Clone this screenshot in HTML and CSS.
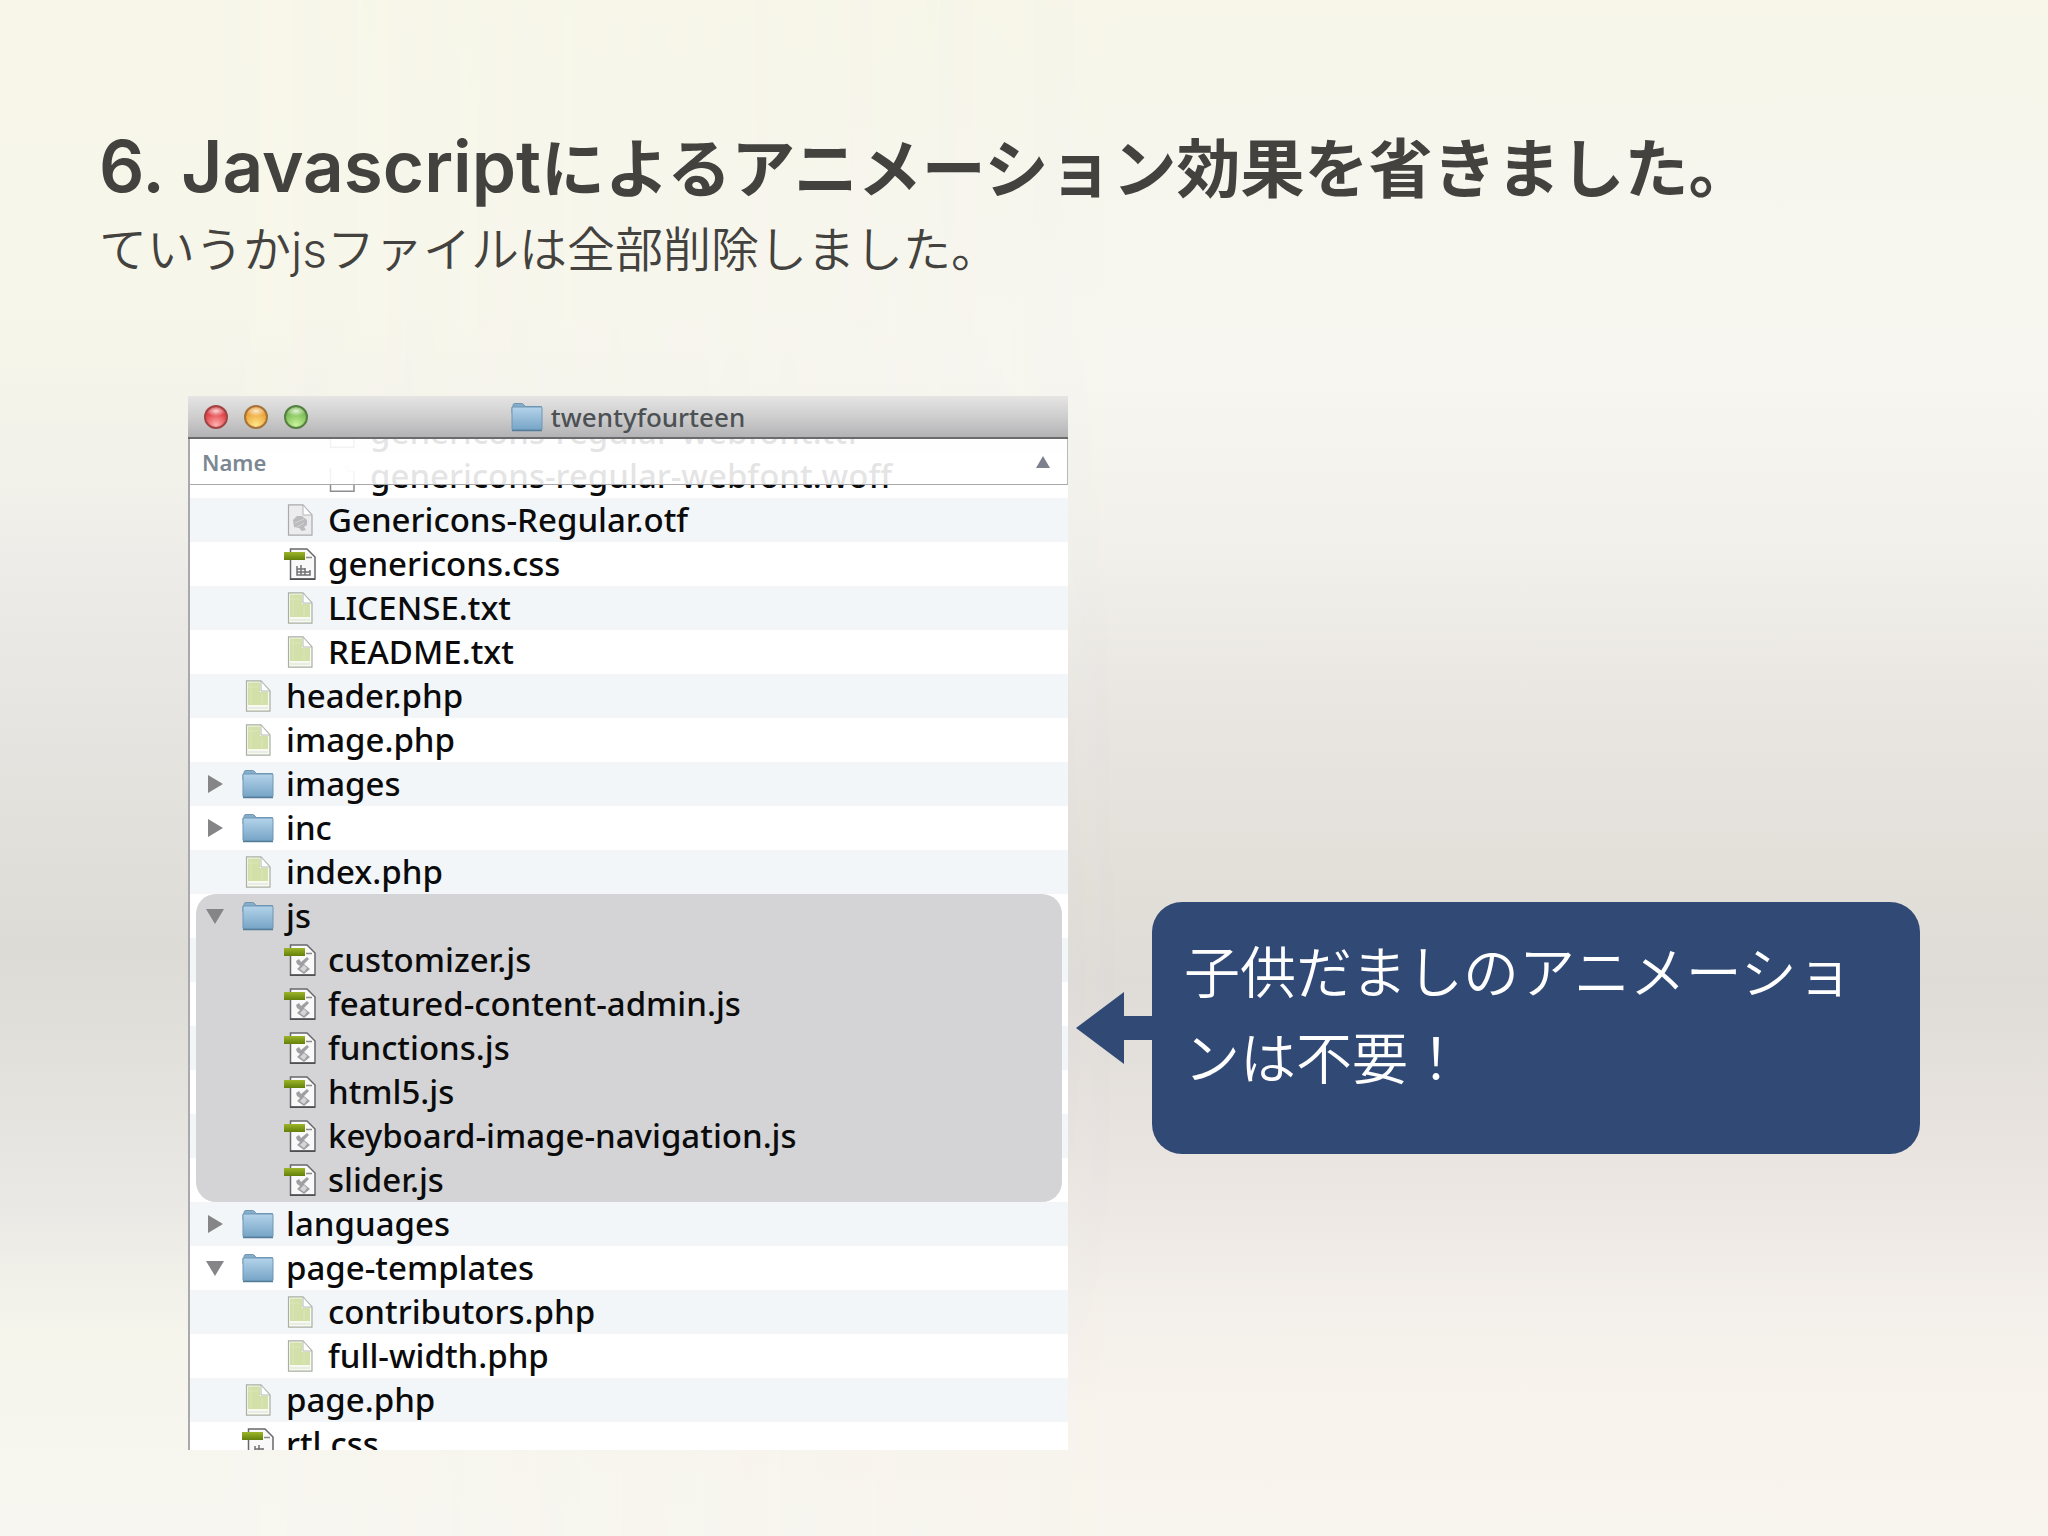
FILE: index.html
```html
<!DOCTYPE html>
<html lang="ja">
<head>
<meta charset="utf-8">
<title>Javascriptによるアニメーション効果を省きました。</title>
<meta name="viewport" content="width=device-width, initial-scale=1">
<link rel="stylesheet" href="styles.css">
</head>
<body>
<svg class="defs" aria-hidden="true">
  <defs>
    <linearGradient id="g-folder" x1="0" y1="0" x2="0" y2="1"><stop offset="0" stop-color="#b4d3ea"/><stop offset="1" stop-color="#76a4c6"/></linearGradient>
    <linearGradient id="g-tag" x1="0" y1="0" x2="0" y2="1"><stop offset="0" stop-color="#9cb52a"/><stop offset="1" stop-color="#63800a"/></linearGradient>
    <symbol id="folder" viewBox="0 0 32 32">
      <path d="M2 6V4.500Q2 2.500 4 2.500H10.500Q12 2.500 13 4L14 5.500H30.500V12H1V6Z" fill="#86aecb" stroke="#6f95b0"/>
      <rect x="1" y="6" width="30" height="23" rx="1" fill="url(#g-folder)" stroke="#6d97b5"/>
      <path d="M1 29.500H31" stroke="#557d9b" stroke-width="1.500"/>
    </symbol>
    <symbol id="doc" viewBox="0 0 32 32">
      <path d="M4.500 .8H19L28 11V31.200H4.500Z" fill="#f7faf0" stroke="#a9b0a2" stroke-width="1.200"/>
      <path d="M6 2.500H18V12H26V25H6Z" fill="#d3e0a9"/>
      <path d="M6 7H16M9 3V24M20 14V24" stroke="#dbe6b8"/>
      <path d="M19 1V11H28Z" fill="#fff" stroke="#b4b8b0"/>
      <path d="M6 28H26" stroke="#dcdfd6"/>
    </symbol>
    <symbol id="font" viewBox="0 0 32 32">
      <path d="M4.500 .8H19L28 11V31.200H4.500Z" fill="#ececee" stroke="#aaaaae" stroke-width="1.200"/>
      <path d="M19 1V11H28Z" fill="#fff" stroke="#b4b4b8"/>
      <path d="M9 16L13 12L18 12L23 16L23 21L20 23L22 26L18 27L15 24L10 23Z" fill="#bbbbbf"/>
      <path d="M11 19L20 15M13 23L20 19" stroke="#d3d3d6"/>
    </symbol>
    <symbol id="plain" viewBox="0 0 32 32">
      <path d="M4.500 8V31.200H28V11" fill="#fff" stroke="#8e8e92" stroke-width="1.500"/>
      <path d="M17 7H22V11H28" fill="none" stroke="#d8b4b4"/>
    </symbol>
    <symbol id="sheet" viewBox="0 0 32 32">
      <path d="M6.500 1H23L31 9V31H6.500Z" fill="#f9f9f9" stroke="#68686b" stroke-width="1.500"/>
      <path d="M22 9.500H28" stroke="#8b8b8e" stroke-width="1.500"/>
      <path d="M6 31.200H31" stroke="#4c4c50" stroke-width="1.500"/>
      <rect x="0" y="4" width="21" height="8" fill="url(#g-tag)"/>
    </symbol>
    <symbol id="css" viewBox="0 0 32 32">
      <use href="#sheet"/>
      <path d="M13 18V27H26V22M17 17V27M21 20V27M13 21H21M13 24H26" fill="none" stroke="#707074" stroke-width="1.500"/>
    </symbol>
    <symbol id="js" viewBox="0 0 32 32">
      <use href="#sheet"/>
      <path d="M12 17L15 15L17 18L23 13L25 15L20 20L26 25L20 30L13 25L16 22L13 20Z" fill="#a0a0a4"/>
      <path d="M16 25L20 21L23 24L20 28Z" fill="#d6d6d9"/>
    </symbol>
  </defs>
</svg>

<main class="slide">
  <header class="heading">
    <h1><span class="latin">6. Javascript</span>によるアニメーション効果を省きました。</h1>
    <p>ていうか<span class="latin">js</span>ファイルは全部削除しました。</p>
  </header>

  <div class="stage">
    <section class="finder" aria-label="twentyfourteen">
      <div class="titlebar">
        <div class="lights">
          <button class="light red" aria-label="Close"></button>
          <button class="light amber" aria-label="Minimize"></button>
          <button class="light green" aria-label="Zoom"></button>
        </div>
        <h2><svg class="icon"><use href="#folder"/></svg>twentyfourteen</h2>
      </div>
      <div class="browser">
        <button class="sort">Name<svg viewBox="0 0 14 12" aria-hidden="true"><path d="M7 0L14 12H0Z"/></svg></button>
        <ul class="files">
          <li class="row l2"><div><svg class="icon"><use href="#plain"/></svg>genericons-regular-webfont.ttf</div></li>
          <li class="row l2"><div><svg class="icon"><use href="#plain"/></svg>genericons-regular-webfont.woff</div></li>
          <li class="row l1"><div><svg class="icon"><use href="#font"/></svg>Genericons-Regular.otf</div></li>
          <li class="row l1"><div><svg class="icon"><use href="#css"/></svg>genericons.css</div></li>
          <li class="row l1"><div><svg class="icon"><use href="#doc"/></svg>LICENSE.txt</div></li>
          <li class="row l1"><div><svg class="icon"><use href="#doc"/></svg>README.txt</div></li>
          <li class="row"><div><svg class="icon"><use href="#doc"/></svg>header.php</div></li>
          <li class="row"><div><svg class="icon"><use href="#doc"/></svg>image.php</div></li>
          <li class="row"><div><button class="twisty" aria-label="Expand images"></button><svg class="icon"><use href="#folder"/></svg>images</div></li>
          <li class="row"><div><button class="twisty" aria-label="Expand inc"></button><svg class="icon"><use href="#folder"/></svg>inc</div></li>
          <li class="row"><div><svg class="icon"><use href="#doc"/></svg>index.php</div></li>
          <li class="row selected first"><div><button class="twisty open" aria-label="Collapse js"></button><svg class="icon"><use href="#folder"/></svg>js</div></li>
          <li class="row l1 selected"><div><svg class="icon"><use href="#js"/></svg>customizer.js</div></li>
          <li class="row l1 selected"><div><svg class="icon"><use href="#js"/></svg>featured-content-admin.js</div></li>
          <li class="row l1 selected"><div><svg class="icon"><use href="#js"/></svg>functions.js</div></li>
          <li class="row l1 selected"><div><svg class="icon"><use href="#js"/></svg>html5.js</div></li>
          <li class="row l1 selected"><div><svg class="icon"><use href="#js"/></svg>keyboard-image-navigation.js</div></li>
          <li class="row l1 selected last"><div><svg class="icon"><use href="#js"/></svg>slider.js</div></li>
          <li class="row"><div><button class="twisty" aria-label="Expand languages"></button><svg class="icon"><use href="#folder"/></svg>languages</div></li>
          <li class="row"><div><button class="twisty open" aria-label="Collapse page-templates"></button><svg class="icon"><use href="#folder"/></svg>page-templates</div></li>
          <li class="row l1"><div><svg class="icon"><use href="#doc"/></svg>contributors.php</div></li>
          <li class="row l1"><div><svg class="icon"><use href="#doc"/></svg>full-width.php</div></li>
          <li class="row"><div><svg class="icon"><use href="#doc"/></svg>page.php</div></li>
          <li class="row"><div><svg class="icon"><use href="#css"/></svg>rtl.css</div></li>
        </ul>
      </div>
    </section>

    <aside class="note">
      <svg class="arrow" viewBox="0 0 76 72" aria-hidden="true"><path d="M0 36L48 0V24H76V48H48V72Z"/></svg>
      <p>子供だましのアニメーションは不要！</p>
    </aside>
  </div>
</main>
</body>
</html>
```
FILE: styles.css
```css
* { box-sizing: border-box; }

body {
  position: relative;
  z-index: 0;
  margin: 0;
  min-height: 100vh;
  color: #43423e;
  font-family: "Noto Sans CJK JP", sans-serif;
  background: linear-gradient(180deg, #f7f6e9 0, #f7f6ee 12%, #f7f6f0 24%, #f2f0ea 36%, #e9e6e2 46%, #e2dfd9 58%, #dfdcd8 64%, #e9e4e0 75%, #f3efea 85%, #f8f4ed 92%, #f8f5ee 100%);
}

/* Cooler, darker band that fades out towards the middle */
body::before {
  content: "";
  position: absolute;
  inset: 0;
  z-index: -1;
  background: linear-gradient(180deg, #f7f6e9 0, #f7f6ea 20%, #f2f1ea 31%, #ebeae7 39%, #e3e2dd 51%, #dcdbd6 62%, #e3e2dd 71%, #e9e8e4 78%, #f6f5ec 87%, #f7f6f0 100%);
  -webkit-mask-image: linear-gradient(90deg, #000 10%, transparent 55%);
  mask-image: linear-gradient(90deg, #000 10%, transparent 55%);
}

.defs { position: absolute; width: 0; height: 0; }

button {
  margin: 0;
  padding: 0;
  border: 0;
  background: none;
  font: inherit;
  color: inherit;
}

.slide { padding: 117px 128px 86px 99px; }

.heading h1 {
  margin: 0;
  font-size: 64px;
  font-weight: 700;
  line-height: 94px;
}

.heading p {
  margin: 0;
  font-size: 48px;
  font-weight: 350;
  line-height: 70px;
}

.latin { font-family: Inter, "Liberation Sans", sans-serif; line-height: 1; }
h1 .latin { font-size: 71px; font-weight: 600; }

.stage {
  display: flex;
  align-items: flex-start;
  gap: 8px;
  padding: 115px 0 0 89px;
}

/* Finder window */
.finder {
  flex: 880;
  min-width: 0;
  font-family: "Noto Sans", sans-serif;
}

.titlebar {
  display: grid;
  grid-template-columns: 1fr auto 1fr;
  align-items: center;
  height: 43px;
  padding: 0 16px;
  border-bottom: 2px solid #6c6b6c;
  background: linear-gradient(#e6e5e4, #cfcecf 50%, #b3b2b4);
}

.titlebar h2 {
  display: flex;
  align-items: center;
  gap: 8px;
  margin: 0;
  font-size: 26px;
  font-weight: 500;
  line-height: 40px;
  color: #4c5154;
}

.lights { display: flex; gap: 16px; }

.light {
  width: 24px;
  height: 24px;
  border: 2px solid;
  border-radius: 50%;
}
.red { border-color: #a04444; background: radial-gradient(ellipse 50% 26% at 50% 20%, #fbd9d9, transparent), radial-gradient(circle at 50% 90%, #ffb0b0, #e2474b 60%, #c92f34); }
.amber { border-color: #a5733a; background: radial-gradient(ellipse 50% 26% at 50% 20%, #fdeccf, transparent), radial-gradient(circle at 50% 90%, #ffe68a, #eda83e 60%, #d58a2b); }
.green { border-color: #568043; background: radial-gradient(ellipse 50% 26% at 50% 20%, #e4f6d8, transparent), radial-gradient(circle at 50% 90%, #c8f59c, #82c05a 60%, #609f41); }

.browser {
  position: relative;
  height: 1011px;
  overflow: hidden;
  border-left: 2px solid #a9a9ab;
  background: #fff;
}

.sort {
  position: absolute;
  inset: 0 0 auto;
  z-index: 1;
  display: flex;
  align-items: center;
  justify-content: space-between;
  height: 46px;
  padding: 0 17px 0 12px;
  border-right: 1px solid #b9b9bd;
  border-bottom: 1px solid #a9a9ad;
  background: rgba(255, 255, 255, .89);
  font-size: 22px;
  font-weight: 600;
  color: #7b8894;
}
.sort svg { width: 14px; height: 12px; fill: #7c818d; }

.files {
  margin: -29px 0 0;
  padding: 0;
  list-style: none;
}

.row {
  padding: 0 6px;
  font-size: 33px;
  font-weight: 500;
  line-height: 44px;
  color: #0b0b0c;
}
.row:nth-child(odd) { background: #f3f6f9; }

.row > div {
  display: flex;
  align-items: center;
  gap: 12px;
  height: 44px;
  padding-left: 46px;
  white-space: nowrap;
}
.row.l1 > div { padding-left: 88px; }
.row.l2 > div { padding-left: 130px; }

.selected > div { background: #d4d4d6; }
.first > div { border-radius: 20px 20px 0 0; }
.last > div { border-radius: 0 0 20px 20px; }

.icon { flex: none; width: 32px; height: 32px; }

.twisty {
  flex: none;
  width: 18px;
  height: 18px;
  margin: 0 6px 0 -36px;
  background: #858587;
  clip-path: polygon(2px 0, 17px 9px, 2px 18px);
}
.twisty.open { clip-path: polygon(0 2px, 18px 2px, 9px 17px); }

/* Callout */
.note {
  flex: 844;
  display: flex;
  align-items: center;
  min-width: 0;
  margin-top: 506px;
}

.arrow {
  flex: none;
  width: 76px;
  height: 72px;
  fill: #314a75;
}

.note p {
  flex: 1;
  min-height: 252px;
  margin: 0;
  padding: 24px 32px;
  border-radius: 30px;
  background: #314a75;
  color: #fff;
  font-size: 56px;
  font-weight: 350;
  line-height: 86px;
}
```
